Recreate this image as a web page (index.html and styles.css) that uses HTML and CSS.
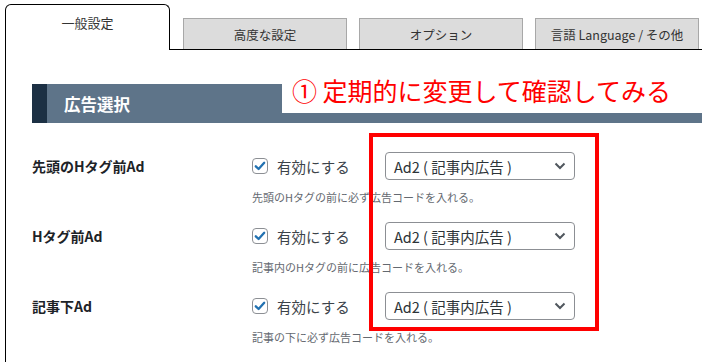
FILE: index.html
```html
<!DOCTYPE html>
<html lang="ja">
<head>
    <meta charset="UTF-8">
    <meta name="viewport" content="width=device-width, initial-scale=1.0">
    <title>広告設定</title>
    <link rel="stylesheet" href="styles.css">
</head>
<body>
    <div class="tabs">
        <div class="tab active">一般設定</div>
        <div class="tab">高度な設定</div>
        <div class="tab">オプション</div>
        <div class="tab">言語 Language / その他</div>
    </div>

    <div class="panel">
        <div class="section-title">
            <span class="title-mark"></span>
            <span class="title-text">広告選択</span>
        </div>

        <div class="rows">
            <div class="row">
                <div class="label">先頭のHタグ前Ad</div>
                <div class="field">
                    <div class="line">
                        <label class="check">
                            <svg width="16" height="16" viewBox="0 0 16 16"><rect x="0.5" y="0.5" width="15" height="15" rx="3.5" fill="#fff" stroke="#8c8f94"/><path d="M3.8 8.3 L6.6 11 L12.2 4.8" fill="none" stroke="#2271b1" stroke-width="2.3" stroke-linecap="round" stroke-linejoin="round"/></svg>
                            <span>有効にする</span>
                        </label>
                        <div class="select">
                            <span>Ad2 ( 記事内広告 )</span>
                            <svg width="12" height="8" viewBox="0 0 12 8"><path d="M1.5 1.5 L6 6 L10.5 1.5" fill="none" stroke="#50575e" stroke-width="2"/></svg>
                        </div>
                    </div>
                    <div class="desc">先頭のHタグの前に必ず広告コードを入れる。</div>
                </div>
            </div>

            <div class="row">
                <div class="label">Hタグ前Ad</div>
                <div class="field">
                    <div class="line">
                        <label class="check">
                            <svg width="16" height="16" viewBox="0 0 16 16"><rect x="0.5" y="0.5" width="15" height="15" rx="3.5" fill="#fff" stroke="#8c8f94"/><path d="M3.8 8.3 L6.6 11 L12.2 4.8" fill="none" stroke="#2271b1" stroke-width="2.3" stroke-linecap="round" stroke-linejoin="round"/></svg>
                            <span>有効にする</span>
                        </label>
                        <div class="select">
                            <span>Ad2 ( 記事内広告 )</span>
                            <svg width="12" height="8" viewBox="0 0 12 8"><path d="M1.5 1.5 L6 6 L10.5 1.5" fill="none" stroke="#50575e" stroke-width="2"/></svg>
                        </div>
                    </div>
                    <div class="desc">記事内のHタグの前に広告コードを入れる。</div>
                </div>
            </div>

            <div class="row">
                <div class="label">記事下Ad</div>
                <div class="field">
                    <div class="line">
                        <label class="check">
                            <svg width="16" height="16" viewBox="0 0 16 16"><rect x="0.5" y="0.5" width="15" height="15" rx="3.5" fill="#fff" stroke="#8c8f94"/><path d="M3.8 8.3 L6.6 11 L12.2 4.8" fill="none" stroke="#2271b1" stroke-width="2.3" stroke-linecap="round" stroke-linejoin="round"/></svg>
                            <span>有効にする</span>
                        </label>
                        <div class="select">
                            <span>Ad2 ( 記事内広告 )</span>
                            <svg width="12" height="8" viewBox="0 0 12 8"><path d="M1.5 1.5 L6 6 L10.5 1.5" fill="none" stroke="#50575e" stroke-width="2"/></svg>
                        </div>
                    </div>
                    <div class="desc">記事の下に必ず広告コードを入れる。</div>
                </div>
            </div>
        </div>
    </div>

    <!-- annotation over the screenshot -->
    <div class="note">① 定期的に変更して確認してみる</div>
    <div class="note-box"></div>
</body>
</html>
```

FILE: styles.css
```css
body {
    margin: 0;
    padding: 0;
    background: #fff;
    font-family: "Noto Sans CJK JP", "Noto Sans", sans-serif;
    color: #1d2327;
    overflow: hidden;
}

.tabs {
    display: flex;
    align-items: flex-end;
    margin-left: 5px;
    padding-top: 4px;
    border-bottom: 1px solid #000;
    height: 45px;
}

.tab {
    flex-shrink: 0;
    width: 162px;
    height: 30px;
    margin-right: 12px;
    background-color: #dcdcdc;
    border: 1px solid #a8a8a8;
    border-bottom: none;
    font-size: 12.5px;
    color: #333;
    display: flex;
    align-items: center;
    justify-content: center;
}

.tab:last-child {
    margin-right: 0;
}

.tab.active {
    width: 163px;
    height: 45px;
    margin-right: 13px;
    margin-bottom: -1px;
    align-items: flex-start;
    line-height: 36px;
    background-color: #fff;
    border: 1px solid #000;
    border-bottom: none;
    border-radius: 6px 6px 0 0;
    font-size: 13px;
}

.panel {
    margin-left: 5px;
    border-left: 1px solid #000;
    padding: 34px 0 0 26px;
}

.section-title {
    display: flex;
    align-items: center;
    height: 39px;
    background-color: #5e7489;
}

.title-mark {
    width: 15px;
    height: 100%;
    background-color: #1c3044;
}

.title-text {
    margin-left: 17px;
    font-size: 16.5px;
    font-weight: bold;
    color: #fff;
}

.rows {
    margin-top: 29px;
}

.row {
    display: flex;
    padding-bottom: 17px;
}

.label {
    width: 220px;
    height: 28px;
    line-height: 28px;
    font-size: 14px;
    font-weight: bold;
    color: #1d2327;
}

.line {
    display: flex;
    align-items: center;
    height: 28px;
}

.check {
    width: 133px;
    display: flex;
    align-items: center;
    font-size: 14.5px;
    color: #3c434a;
}

.check svg {
    margin-right: 9px;
}

.select {
    width: 172px;
    height: 26px;
    padding: 0 8px;
    border: 1px solid #8c8f94;
    border-radius: 4px;
    display: flex;
    align-items: center;
    justify-content: space-between;
    font-size: 14.5px;
    color: #2c3338;
}

.desc {
    margin-top: 9px;
    font-size: 11px;
    line-height: 16px;
    color: #646970;
}

.note {
    position: absolute;
    left: 282px;
    top: 68px;
    width: 420px;
    height: 45px;
    padding-left: 10px;
    box-sizing: border-box;
    background: #fff;
    color: #ff0000;
    font-size: 25px;
    line-height: 45px;
    white-space: nowrap;
}

.note-box {
    position: absolute;
    left: 369px;
    top: 133px;
    width: 222px;
    height: 190px;
    border: 4px solid #ff0000;
}
```
